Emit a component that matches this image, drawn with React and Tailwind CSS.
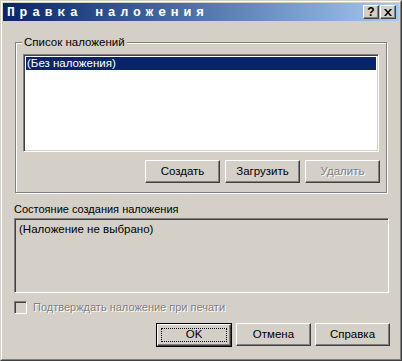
const ui = { fontFamily: '"Liberation Sans", Arial, sans-serif' };

const raised =
  'border border-t-white border-l-white border-r-[#404040] border-b-[#404040] shadow-[inset_-1px_-1px_0_#808080] bg-[#d4d0c8]';
const sunken =
  'border border-t-[#808080] border-l-[#808080] border-r-white border-b-white shadow-[inset_1px_1px_0_#404040,inset_-1px_-1px_0_#d4d0c8]';

const Button = ({ children, disabled, isDefault }) => {
  if (isDefault) {
    return (
      <div className="w-[76px] h-[24px] border border-black">
        <div className={`${raised} w-full h-full flex items-center justify-center p-[3px]`}>
          <div className="w-full h-full border border-dotted border-black flex items-center justify-center text-[11.5px] text-black">
            {children}
          </div>
        </div>
      </div>
    );
  }
  return (
    <div
      className={`${raised} w-[75px] h-[23px] flex items-center justify-center text-[11.5px] ${
        disabled ? 'text-[#808080] [text-shadow:1px_1px_0_#fff]' : 'text-black'
      }`}
    >
      {children}
    </div>
  );
};

const CaptionButton = ({ children }) => (
  <div className={`${raised} w-[16px] h-[14px] flex items-center justify-center`}>{children}</div>
);

export default function App() {
  return (
    <div className="w-[402px] h-[361px] bg-[#d4d0c8] select-none" style={ui}>
      <div className="w-full h-full border border-t-[#d4d0c8] border-l-[#d4d0c8] border-r-[#404040] border-b-[#404040]">
        <div className="w-full h-full border border-t-white border-l-white border-r-[#808080] border-b-[#808080] p-[1px] flex flex-col">
          {/* title bar */}
          <div className="h-[18px] bg-gradient-to-r from-[#0a246a] to-[#a6caf0] flex items-center pl-[4px] pr-[2px]">
            <span
              className="text-white font-bold text-[13px] tracking-[4.8px] leading-none flex-1"
              style={{ fontFamily: '"Liberation Mono", "Courier New", monospace' }}
            >
              Правка наложения
            </span>
            <div className="flex gap-[1px] mr-[1px]">
              <CaptionButton>
                <span className="text-[12px] font-bold leading-none text-black">?</span>
              </CaptionButton>
              <CaptionButton>
                <svg width="8" height="7" viewBox="0 0 8 7">
                  <path d="M0 0h2l2 2.5L6 0h2L5 3.5 8 7H6L4 4.5 2 7H0l3-3.5z" fill="black" />
                </svg>
              </CaptionButton>
            </div>
          </div>

          {/* group box */}
          <div className="relative ml-[12px] mt-[21px] w-[372px] h-[151px] border border-[#808080] shadow-[inset_1px_1px_0_#fff,1px_1px_0_#fff] px-[7px] pt-[11px]">
            <span className="absolute left-[6px] top-[-8px] bg-[#d4d0c8] px-[2px] text-[11.5px] leading-[14px] text-black">
              Список наложений
            </span>
            <div className={`${sunken} bg-white w-[356px] h-[98px] p-[2px]`}>
              <div className="bg-[#0a246a] text-white text-[11.5px] leading-[13px] h-[13px] pl-[1px]">(Без наложения)</div>
            </div>
            <div className="flex justify-end gap-[5px] mt-[8px] mr-[-1px]">
              <Button>Создать</Button>
              <Button>Загрузить</Button>
              <Button disabled>Удалить</Button>
            </div>
          </div>

          {/* status */}
          <div className="ml-[11px] mt-[9px] text-[11px] leading-[14px] text-black">Состояние создания наложения</div>
          <div className={`${sunken} ml-[11px] mt-[2px] w-[375px] h-[75px] px-[4px] pt-[3px] text-[11.5px] leading-[14px] text-black`}>
            (Наложение не выбрано)
          </div>

          {/* checkbox */}
          <div className="ml-[11px] mt-[7px] flex items-center gap-[6px]">
            <div className={`${sunken} w-[13px] h-[13px] bg-[#d4d0c8]`} />
            <span className="text-[11px] leading-[14px] text-[#808080] [text-shadow:1px_1px_0_#fff]">
              Подтверждать наложение при печати
            </span>
          </div>

          {/* dialog buttons */}
          <div className="flex justify-end gap-[4px] mt-[9px] mr-[9px]">
            <Button isDefault>OK</Button>
            <Button>Отмена</Button>
            <Button>Справка</Button>
          </div>
        </div>
      </div>
    </div>
  );
}
